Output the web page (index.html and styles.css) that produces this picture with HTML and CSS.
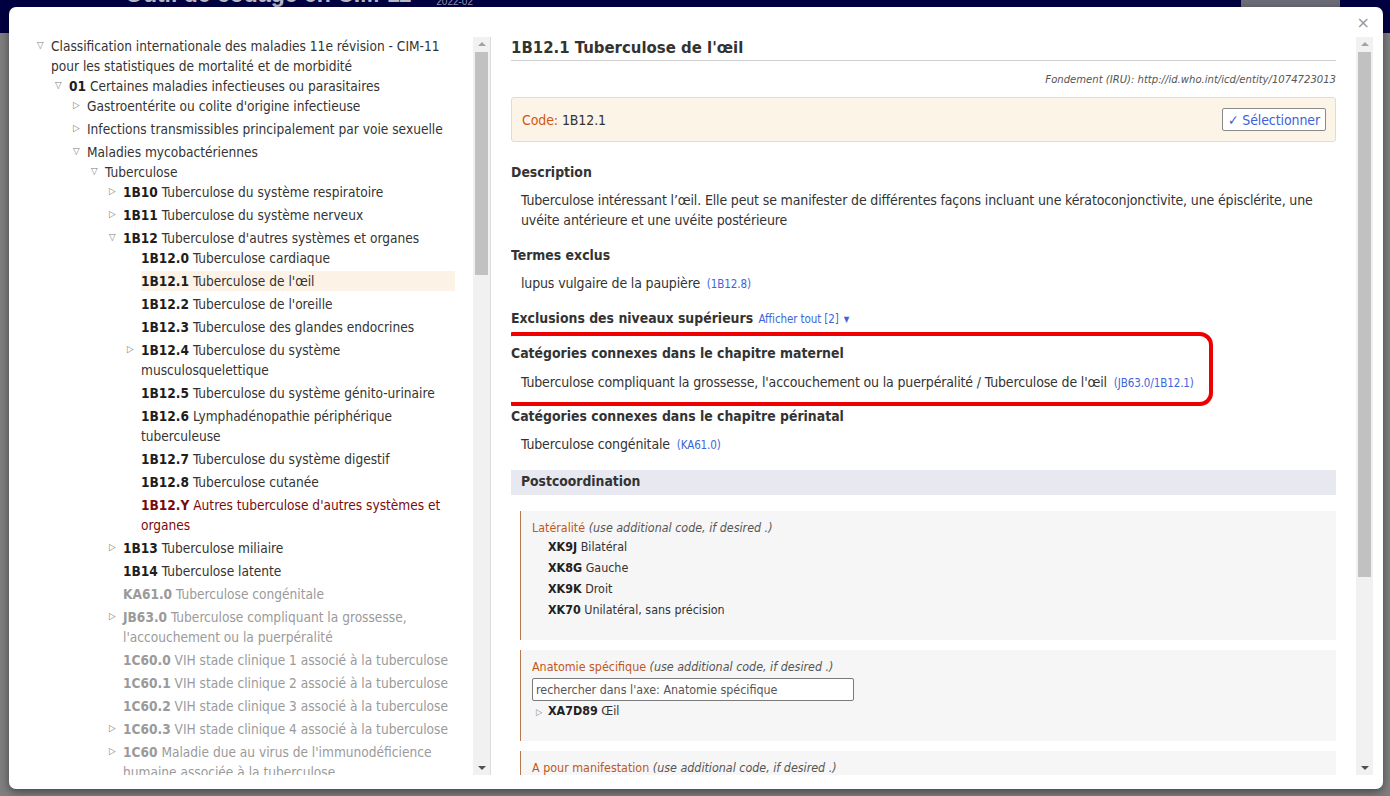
FILE: index.html
```html
<!DOCTYPE html>
<html lang="fr">
<head>
<meta charset="utf-8">
<title>Outil de codage en CIM-11</title>
<link rel="stylesheet" href="styles.css">
</head>
<body>
<header class="page-header">
  <div class="brand">Outil de codage en CIM-11</div>
  <div class="version">2022-02</div>
  <div class="hdr-btn"></div>
</header>

<div class="modal">
  <button class="close" type="button">×</button>
  <div class="modal-body">
    <div class="tree-pane">
      <div class="tree-scroll">
        <ul class="tree">
          <li>
            <div class="row"><span class="tg">▽</span><span class="lbl">Classification internationale des maladies 11e révision - CIM-11 pour les statistiques de mortalité et de morbidité</span></div>
            <ul>
              <li>
                <div class="row"><span class="tg">▽</span><span class="lbl"><b>01</b> Certaines maladies infectieuses ou parasitaires</span></div>
                <ul>
                  <li><div class="row"><span class="tg">▷</span><span class="lbl">Gastroentérite ou colite d'origine infectieuse</span></div></li>
                  <li><div class="row"><span class="tg">▷</span><span class="lbl">Infections transmissibles principalement par voie sexuelle</span></div></li>
                  <li>
                    <div class="row"><span class="tg">▽</span><span class="lbl">Maladies mycobactériennes</span></div>
                    <ul>
                      <li>
                        <div class="row"><span class="tg">▽</span><span class="lbl">Tuberculose</span></div>
                        <ul>
                          <li><div class="row"><span class="tg">▷</span><span class="lbl"><b>1B10</b> Tuberculose du système respiratoire</span></div></li>
                          <li><div class="row"><span class="tg">▷</span><span class="lbl"><b>1B11</b> Tuberculose du système nerveux</span></div></li>
                          <li>
                            <div class="row"><span class="tg">▽</span><span class="lbl"><b>1B12</b> Tuberculose d'autres systèmes et organes</span></div>
                            <ul>
                              <li><div class="row"><span class="tg"></span><span class="lbl"><b>1B12.0</b> Tuberculose cardiaque</span></div></li>
                              <li><div class="row"><span class="tg"></span><span class="lbl selected"><b>1B12.1</b> Tuberculose de l'œil</span></div></li>
                              <li><div class="row"><span class="tg"></span><span class="lbl"><b>1B12.2</b> Tuberculose de l'oreille</span></div></li>
                              <li><div class="row"><span class="tg"></span><span class="lbl"><b>1B12.3</b> Tuberculose des glandes endocrines</span></div></li>
                              <li><div class="row"><span class="tg">▷</span><span class="lbl"><b>1B12.4</b> Tuberculose du système musculosquelettique</span></div></li>
                              <li><div class="row"><span class="tg"></span><span class="lbl"><b>1B12.5</b> Tuberculose du système génito-urinaire</span></div></li>
                              <li><div class="row"><span class="tg"></span><span class="lbl"><b>1B12.6</b> Lymphadénopathie périphérique tuberculeuse</span></div></li>
                              <li><div class="row"><span class="tg"></span><span class="lbl"><b>1B12.7</b> Tuberculose du système digestif</span></div></li>
                              <li><div class="row"><span class="tg"></span><span class="lbl"><b>1B12.8</b> Tuberculose cutanée</span></div></li>
                              <li><div class="row"><span class="tg"></span><span class="lbl residual"><b>1B12.Y</b> Autres tuberculose d'autres systèmes et organes</span></div></li>
                            </ul>
                          </li>
                          <li><div class="row"><span class="tg">▷</span><span class="lbl"><b>1B13</b> Tuberculose miliaire</span></div></li>
                          <li><div class="row"><span class="tg"></span><span class="lbl"><b>1B14</b> Tuberculose latente</span></div></li>
                          <li><div class="row"><span class="tg"></span><span class="lbl linked"><b>KA61.0</b> Tuberculose congénitale</span></div></li>
                          <li><div class="row"><span class="tg">▷</span><span class="lbl linked"><b>JB63.0</b> Tuberculose compliquant la grossesse, l'accouchement ou la puerpéralité</span></div></li>
                          <li><div class="row"><span class="tg"></span><span class="lbl linked"><b>1C60.0</b> VIH stade clinique 1 associé à la tuberculose</span></div></li>
                          <li><div class="row"><span class="tg"></span><span class="lbl linked"><b>1C60.1</b> VIH stade clinique 2 associé à la tuberculose</span></div></li>
                          <li><div class="row"><span class="tg"></span><span class="lbl linked"><b>1C60.2</b> VIH stade clinique 3 associé à la tuberculose</span></div></li>
                          <li><div class="row"><span class="tg">▷</span><span class="lbl linked"><b>1C60.3</b> VIH stade clinique 4 associé à la tuberculose</span></div></li>
                          <li><div class="row"><span class="tg">▷</span><span class="lbl linked"><b>1C60</b> Maladie due au virus de l'immunodéficience humaine associée à la tuberculose</span></div></li>
                          <li><div class="row"><span class="tg">▷</span><span class="lbl linked"><b>1C62</b> Infections à mycobactéries non tuberculeuses</span></div></li>
                        </ul>
                      </li>
                    </ul>
                  </li>
                </ul>
              </li>
            </ul>
          </li>
        </ul>
      </div>
      <div class="scrollbar">
        <div class="sb-btn"><span class="arrow-up off"></span></div>
        <div class="sb-thumb thumb-tree"></div>
        <div class="sb-fill"></div>
        <div class="sb-btn"><span class="arrow-down"></span></div>
      </div>
    </div>

    <div class="detail-pane">
      <div class="detail-scroll">
        <h1 class="title">1B12.1 Tuberculose de l'œil</h1>
        <div class="uri">Fondement (IRU): http://id.who.int/icd/entity/1074723013</div>
        <div class="code-box">
          <span class="code-text"><span class="code-label">Code:</span> 1B12.1</span>
          <button class="select-btn" type="button">✓ Sélectionner</button>
        </div>

        <section class="sec first">
          <h2>Description</h2>
          <p>Tuberculose intéressant l’œil. Elle peut se manifester de différentes façons incluant une kératoconjonctivite, une épisclérite, une uvéite antérieure et une uvéite postérieure</p>
        </section>

        <section class="sec">
          <h2>Termes exclus</h2>
          <p>lupus vulgaire de la paupière <a class="ref">(1B12.8)</a></p>
        </section>

        <section class="sec">
          <h2>Exclusions des niveaux supérieurs <a class="show-all">Afficher tout [2] <span class="caret">▼</span></a></h2>
        </section>

        <section class="sec highlight">
          <h2>Catégories connexes dans le chapitre maternel</h2>
          <p>Tuberculose compliquant la grossesse, l'accouchement ou la puerpéralité / Tuberculose de l'œil <a class="ref">(JB63.0/1B12.1)</a></p>
        </section>

        <section class="sec after-highlight">
          <h2>Catégories connexes dans le chapitre périnatal</h2>
          <p>Tuberculose congénitale <a class="ref">(KA61.0)</a></p>
        </section>

        <div class="pc-bar">Postcoordination</div>

        <div class="axis axis-lat">
          <div class="axis-label">Latéralité <em>(use additional code, if desired .)</em></div>
          <ul class="axis-list">
            <li><b>XK9J</b> Bilatéral</li>
            <li><b>XK8G</b> Gauche</li>
            <li><b>XK9K</b> Droit</li>
            <li><b>XK70</b> Unilatéral, sans précision</li>
          </ul>
        </div>

        <div class="axis axis-anat">
          <div class="axis-label">Anatomie spécifique <em>(use additional code, if desired .)</em></div>
          <input class="axis-search" type="text" placeholder="rechercher dans l'axe: Anatomie spécifique">
          <div class="axis-node"><span class="tg-small">▷</span><b>XA7D89</b> Œil</div>
        </div>

        <div class="axis">
          <div class="axis-label">A pour manifestation <em>(use additional code, if desired .)</em></div>
          <input class="axis-search" type="text" placeholder="rechercher dans l'axe: A pour manifestation">
        </div>
      </div>
      <div class="scrollbar">
        <div class="sb-btn"><span class="arrow-up off"></span></div>
        <div class="sb-thumb thumb-detail"></div>
        <div class="sb-fill"></div>
        <div class="sb-btn"><span class="arrow-down"></span></div>
      </div>
    </div>
  </div>
</div>
</body>
</html>
```

FILE: styles.css
```css
* { box-sizing: border-box; }

html, body {
  margin: 0;
  height: 100%;
}

body {
  background: #7f7f7f;
  overflow: hidden;
  font-family: "DejaVu Sans Condensed", "DejaVu Sans", sans-serif;
  color: #333;
}

/* page behind the dialog (dimmed) */
.page-header {
  height: 33px;
  background: #000042;
  display: flex;
  align-items: flex-start;
  overflow: hidden;
}

.brand {
  margin-left: 125px;
  margin-top: -19px;
  font: bold 23px/27px "Liberation Sans", sans-serif;
  color: #b9b9c6;
  white-space: nowrap;
}

.version {
  margin-left: 25px;
  margin-top: -5px;
  font: 10px/14px "Liberation Sans", sans-serif;
  color: #9a9ab0;
}

.hdr-btn {
  margin-left: auto;
  margin-right: 50px;
  width: 99px;
  height: 30px;
  margin-top: -23px;
  background: #6d6d79;
}

/* dialog */
.modal {
  position: absolute;
  left: 9px;
  top: 7px;
  width: 1374px;
  height: 782px;
  background: #fff;
  border-radius: 7px;
  box-shadow: 0 3px 10px rgba(0, 0, 0, 0.45);
  padding: 30px 0 14px;
}

.close {
  position: absolute;
  right: 13px;
  top: 7px;
  border: 0;
  background: none;
  padding: 0;
  font: 16px/18px "DejaVu Sans", sans-serif;
  color: #9a9a9a;
}

.modal-body {
  display: flex;
  height: 738px;
}

/* left tree */
.tree-pane {
  flex: none;
  width: 481px;
  display: flex;
  padding-left: 27px;
}

.tree-scroll {
  width: 419px;
  height: 738px;
  margin-right: 18px;
  overflow: hidden;
}

.tree, .tree ul {
  list-style: none;
  margin: 0;
  padding: 0;
}

.tree { margin-top: -1px; }

.tree ul { padding-left: 18px; }

.tree li + li { margin-top: 3px; }

.row {
  display: flex;
  font-size: 13.6px;
  line-height: 20px;
}

.tg {
  flex: none;
  width: 15px;
  font-size: 9.5px;
  line-height: 18px;
  color: #7a7a7a;
  padding-left: 1px;
}

.lbl {
  flex: 1;
  color: #333;
}

.lbl b {
  color: #1e1e1e;
}

.lbl.selected { background: #fcf2e6; }

.lbl.residual, .lbl.residual b { color: #7b0a0a; }

.lbl.linked, .lbl.linked b { color: #9a9a9a; }

/* fake scrollbars */
.scrollbar {
  flex: none;
  width: 17px;
  height: 738px;
  background: #f1f1f1;
  display: flex;
  flex-direction: column;
}

.sb-btn {
  height: 14px;
  display: flex;
  align-items: center;
  justify-content: center;
}

.arrow-up, .arrow-down {
  width: 0;
  height: 0;
  border-left: 4px solid transparent;
  border-right: 4px solid transparent;
}

.arrow-up { border-bottom: 4px solid #505050; }
.arrow-up.off { border-bottom-color: #a3a3a3; }
.arrow-down { border-top: 4px solid #505050; }

.sb-thumb {
  margin: 1px 2px 0;
  background: #c1c1c1;
}

.thumb-tree { height: 223px; }
.thumb-detail { height: 525px; }

.sb-fill { flex: 1; }

/* right details */
.detail-pane {
  flex: 1;
  display: flex;
  border-left: 1px solid #dcdcdc;
  padding-left: 20px;
}

.detail-scroll {
  width: 825px;
  height: 738px;
  margin-right: 20px;
  overflow: hidden;
  font-family: "DejaVu Sans Condensed", "DejaVu Sans", sans-serif;
  color: #333;
}

.title {
  margin: 0;
  font-size: 16.6px;
  line-height: 22px;
  font-weight: bold;
  color: #333;
  padding-bottom: 1px;
  border-bottom: 1px solid #cfcfcf;
}

.uri {
  margin-top: 12px;
  text-align: right;
  font-size: 11.2px;
  line-height: 14px;
  font-style: italic;
  color: #555;
}

.code-box {
  margin-top: 10px;
  height: 45px;
  display: flex;
  align-items: center;
  justify-content: space-between;
  padding: 0 9px 0 10px;
  background: #fdf4e8;
  border: 1px solid #dcdcdc;
  border-radius: 3px;
  font-size: 14px;
  letter-spacing: -0.1px;
}

.code-label { color: #d4570f; }

.select-btn {
  height: 23px;
  padding: 0 5px;
  background: #fff;
  border: 1px solid #8a8a8a;
  border-radius: 2px;
  font: 14px/20px "DejaVu Sans Condensed", "DejaVu Sans", sans-serif;
  letter-spacing: -0.1px;
  color: #3d62d6;
}

.sec { margin-top: 15px; }
.sec.first { margin-top: 20px; }
.sec.after-highlight { margin-top: 14px; }

.sec h2 {
  margin: 0;
  height: 20px;
  font-size: 13.9px;
  line-height: 20px;
  font-weight: bold;
  color: #333;
}

.sec p {
  margin: 8px 0 0;
  padding-left: 10px;
  font-size: 14px;
  letter-spacing: -0.15px;
  line-height: 20px;
}

.highlight p { margin-top: 9px; }

.ref, .show-all {
  color: #3d66db;
  font-size: 11.5px;
  font-weight: normal;
  text-decoration: none;
  letter-spacing: -0.1px;
  line-height: 16px;
}

.ref { margin-left: 3px; }
.show-all { margin-left: 1px; }

.caret {
  font-size: 8px;
  margin-left: 2px;
  vertical-align: 1px;
}

/* red annotation ring drawn over the section */
.sec.highlight {
  position: relative;
  width: fit-content;
}

.sec.highlight::after {
  content: "";
  position: absolute;
  left: -11px;
  right: -19px;
  top: -11px;
  bottom: -14px;
  border: 4px solid #ee0000;
  border-radius: 13px;
}

.pc-bar {
  margin-top: 16px;
  height: 25px;
  padding-left: 10px;
  background: #e8e8f0;
  font-size: 13.8px;
  font-weight: bold;
  line-height: 23px;
  color: #333;
}

.axis {
  margin: 10px 0 0 9px;
  padding: 9px 11px 19px;
  background: #f6f6f6;
  border-left: 1px solid #b9784c;
}

.axis-lat {
  margin-top: 16px;
  padding-bottom: 20px;
}

.axis-label {
  font-size: 12.4px;
  line-height: 16px;
  color: #c0581c;
}

.axis-label em {
  color: #555;
}

.axis-list {
  list-style: none;
  margin: 0;
  padding: 0 0 0 16px;
}

.axis-list li {
  font-size: 12.4px;
  line-height: 21px;
  color: #333;
}

.axis-list b, .axis-node b {
  color: #222;
}

.axis-search {
  display: block;
  margin-top: 3px;
  width: 322px;
  height: 23px;
  padding: 0 3px;
  border: 1px solid #7a7a7a;
  border-radius: 2px;
  background: #fff;
  font: 12.4px "DejaVu Sans Condensed", "DejaVu Sans", sans-serif;
  color: #555;
}

.axis-search::placeholder { color: #555; }

.axis-node {
  font-size: 12.4px;
  line-height: 19px;
}

.tg-small {
  display: inline-block;
  width: 16px;
  padding-left: 4px;
  font-size: 9px;
  color: #888;
}
```
